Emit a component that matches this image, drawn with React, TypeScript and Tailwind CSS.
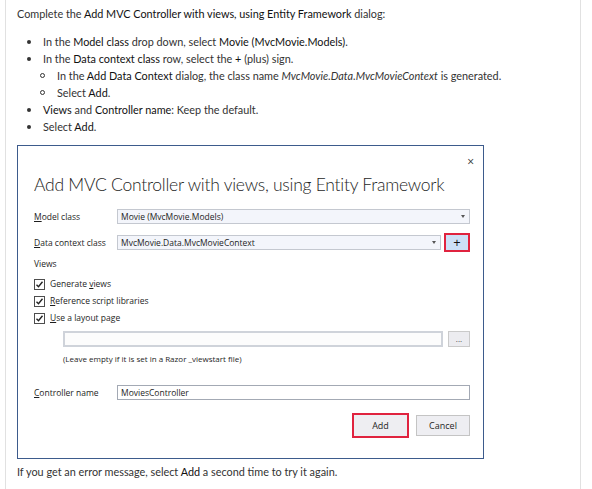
import React from "react";

const ui = { fontFamily: '"Open Sans", "Noto Sans", Arial, sans-serif' };
const body = { fontFamily: 'Lato, "Open Sans", Arial, sans-serif' };

function Check() {
  return (
    <span className="flex h-[11px] w-[11px] items-center justify-center border border-[#4d4d4d] bg-white">
      <svg width="9" height="9" viewBox="0 0 9 9">
        <path d="M1.5 4.8 L3.5 6.8 L7.5 1.8" fill="none" stroke="#222" strokeWidth="1.4" />
      </svg>
    </span>
  );
}

function Caret() {
  return <span className="mr-[4px] h-0 w-0 border-x-[2px] border-t-[3px] border-x-transparent border-t-[#555]" />;
}

export default function App() {
  return (
    <div className="h-[489px] w-[592px] overflow-hidden bg-white" style={ui}>
      <div className="ml-[5px] h-full w-[576px] border-x border-[#e1e1e1] pl-[11px] pt-[5px] text-[10.85px] leading-[17px] text-[#333]" style={body}>
        <p>
          Complete the <span className="text-[#111]">Add MVC Controller with views, using Entity Framework</span> dialog:
        </p>
        <ul className="mt-[11px] flex flex-col">
          <li className="flex items-center">
            <span className="ml-[10px] mr-[12px] h-[4px] w-[4px] rounded-full bg-[#333]" />
            <span>
              In the <span className="text-[#111]">Model class</span> drop down, select <span className="text-[#111]">Movie (MvcMovie.Models)</span>.
            </span>
          </li>
          <li className="flex items-center">
            <span className="ml-[10px] mr-[12px] h-[4px] w-[4px] rounded-full bg-[#333]" />
            <span>
              In the <span className="text-[#111]">Data context class</span> row, select the <span className="text-[#111]">+</span> (plus) sign.
            </span>
          </li>
          <li className="flex items-center">
            <span className="ml-[23px] mr-[12px] h-[5px] w-[5px] rounded-full border border-[#333]" />
            <span>
              In the <span className="text-[#111]">Add Data Context</span> dialog, the class name <em>MvcMovie.Data.MvcMovieContext</em> is generated.
            </span>
          </li>
          <li className="flex items-center">
            <span className="ml-[23px] mr-[12px] h-[5px] w-[5px] rounded-full border border-[#333]" />
            <span>
              Select <span className="text-[#111]">Add</span>.
            </span>
          </li>
          <li className="flex items-center">
            <span className="ml-[10px] mr-[12px] h-[4px] w-[4px] rounded-full bg-[#333]" />
            <span>
              <span className="text-[#111]">Views</span> and <span className="text-[#111]">Controller name</span>: Keep the default.
            </span>
          </li>
          <li className="flex items-center">
            <span className="ml-[10px] mr-[12px] h-[4px] w-[4px] rounded-full bg-[#333]" />
            <span>
              Select <span className="text-[#111]">Add</span>.
            </span>
          </li>
        </ul>

        <div className="mt-[10px] flex h-[314px] w-[467px] flex-col border border-[#3d5b8c] bg-white pl-[16px] pr-[13px] text-[8.5px] leading-[12px] text-[#1e1e1e]" style={ui}>
          <div className="flex h-[22px] items-end justify-end">
            <span className="mr-[-4px] text-[12px] leading-[12px] text-[#333]">×</span>
          </div>
          <div className="mt-[5px] whitespace-nowrap text-[17.5px] font-light leading-[24px] tracking-[-0.25px] text-[#1e1e1e]" style={body}>
            Add MVC Controller with views, using Entity Framework
          </div>
          <div className="mt-[12px] flex items-center">
            <span className="w-[83px]"><u>M</u>odel class</span>
            <div className="flex h-[15px] flex-1 items-center justify-between border border-[#c4c8d0] bg-[#f3f5fb] pl-[3px]">
              <span>Movie (MvcMovie.Models)</span>
              <Caret />
            </div>
          </div>
          <div className="mt-[9px] flex items-center">
            <span className="w-[83px]"><u>D</u>ata context class</span>
            <div className="flex h-[15px] flex-1 items-center justify-between border border-[#c4c8d0] bg-[#f3f5fb] pl-[3px]">
              <span>MvcMovie.Data.MvcMovieContext</span>
              <Caret />
            </div>
            <div className="ml-[3px] flex h-[19px] w-[26px] items-center justify-center border-2 border-[#e0233f] bg-[#cde0f7] text-[13px] leading-[13px] text-[#111]">
              +
            </div>
          </div>
          <div className="mt-[6px]">Views</div>
          <div className="mt-[8px] flex items-center gap-[5px]">
            <Check />
            <span>Generate <u>v</u>iews</span>
          </div>
          <div className="mt-[5px] flex items-center gap-[5px]">
            <Check />
            <span><u>R</u>eference script libraries</span>
          </div>
          <div className="mt-[5px] flex items-center gap-[5px]">
            <Check />
            <span><u>U</u>se a layout page</span>
          </div>
          <div className="ml-[29px] mt-[7px] flex items-center">
            <div className="h-[16px] w-[380px] border-2 border-[#cfd3da] bg-[#fcfcfc]" />
            <div className="ml-[5px] flex h-[16px] w-[22px] items-center justify-center border border-[#cacaca] bg-[#ececf0] text-[8px] text-[#444]">
              ...
            </div>
          </div>
          <div className="ml-[29px] mt-[6px] text-[8px]">(Leave empty if it is set in a Razor _viewstart file)</div>
          <div className="mt-[20px] flex items-center">
            <span className="w-[83px]"><u>C</u>ontroller name</span>
            <div className="flex h-[15px] flex-1 items-center border border-[#a3a9b4] bg-white pl-[3px]">
              <span>MoviesController</span>
            </div>
          </div>
          <div className="mt-[13px] flex items-center justify-end gap-[7px]">
            <div className="flex h-[25px] w-[57px] items-center justify-center border-2 border-[#e0233f] bg-[#eeeef2] text-[9px]">
              Add
            </div>
            <div className="flex h-[21px] w-[54px] items-center justify-center border border-[#c4c4c4] bg-[#eeeef2] text-[9px]">
              Cancel
            </div>
          </div>
        </div>

        <p className="mt-[4px]">
          If you get an error message, select <span className="text-[#111]">Add</span> a second time to try it again.
        </p>
      </div>
    </div>
  );
}
